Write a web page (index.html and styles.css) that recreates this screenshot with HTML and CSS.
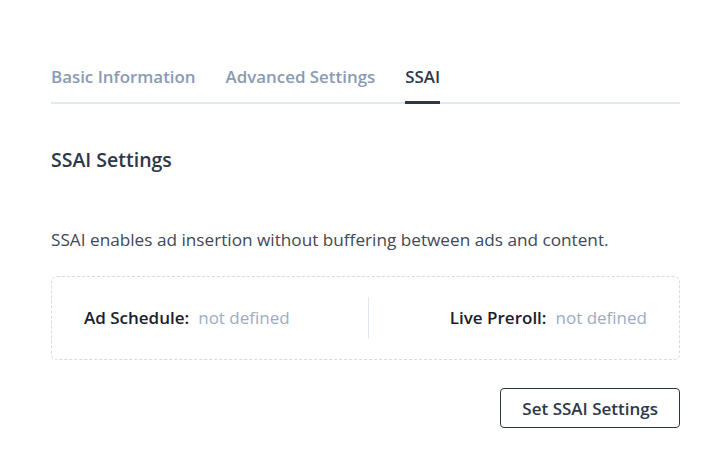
FILE: index.html
```html
<!DOCTYPE html>
<html>
<head>
<meta charset="utf-8">
<link rel="stylesheet" href="styles.css">
</head>
<body>
<div class="page">
  <nav class="tabs">
    <div class="tab">Basic Information</div>
    <div class="tab">Advanced Settings</div>
    <div class="tab active">SSAI</div>
  </nav>
  <h2 class="title">SSAI Settings</h2>
  <p class="desc">SSAI enables ad insertion without buffering between ads and content.</p>
  <div class="box">
    <div class="field left"><span class="label">Ad Schedule:</span><span class="value">not defined</span></div>
    <div class="divider"></div>
    <div class="field right"><span class="label">Live Preroll:</span><span class="value">not defined</span></div>
  </div>
  <div class="actions">
    <button class="btn">Set SSAI Settings</button>
  </div>
</div>
</body>
</html>
```
FILE: styles.css
```css
html, body { margin: 0; padding: 0; background: #fff; }
body { font-family: "Open Sans", "Noto Sans", sans-serif; color: #2d3748; }
.page { padding: 65px 48px 0 51px; width: 629px; }
.tabs { display: flex; gap: 30px; border-bottom: 2px solid #e2e8f0; }
.tab { font-size: 16.9px; font-weight: 600; color: #8a9ab4; padding-bottom: 12px; line-height: 24px; margin-bottom: -2px; border-bottom: 3px solid transparent; }
.tab.active { color: #2d3748; border-bottom-color: #2d3748; }
.title { font-size: 19.5px; font-weight: 600; margin: 43px 0 0; line-height: 26px; color: #2d3748; }
.desc { font-size: 17.2px; margin: 55px 0 0; line-height: 24px; color: #404859; }
.box { margin-top: 24px; border: 1px dashed #d5dae3; border-radius: 6px; height: 82px; padding: 0 32px; display: flex; align-items: center; }
.field { flex: 1; display: flex; font-size: 17px; line-height: 24px; }
.field.right { justify-content: flex-end; }
.label { font-weight: 600; color: #1a202c; margin-right: 9px; }
.value { color: #9eabc2; }
.divider { width: 1px; height: 42px; background: #e2e8f0; margin-left: 6px; }
.actions { display: flex; justify-content: flex-end; margin-top: 28px; }
.btn { font-family: inherit; font-size: 17px; font-weight: 600; color: #2d3748; background: #fff; border: 1px solid #2d3748; border-radius: 4px; height: 40px; padding: 0 21px; }
```
